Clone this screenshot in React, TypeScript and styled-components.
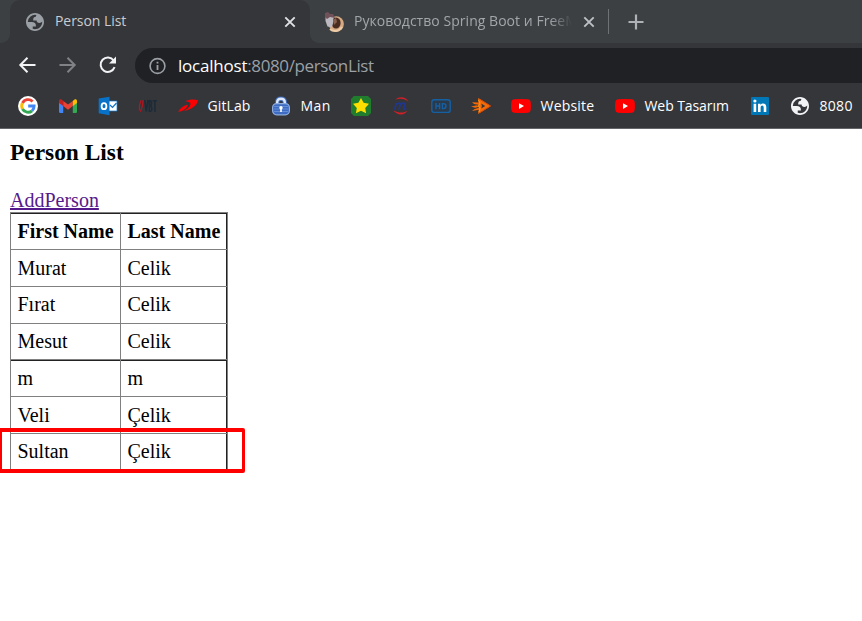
import React from "react";
import styled, { createGlobalStyle } from "styled-components";

const Global = createGlobalStyle`
  * { box-sizing: border-box; }
  html, body { margin: 0; background: #fff; overflow: hidden; }
`;

const Screen = styled.div`
  width: 862px;
  height: 621px;
  overflow: hidden;
  background: #fff;
`;

const Chrome = styled.header`
  height: 129px;
  background: #35363a;
  border-bottom: 1px solid #646568;
  font-family: "Open Sans", "Noto Sans", sans-serif;
`;

const TabStrip = styled.div`
  height: 43px;
  display: flex;
  background: #35363a;
`;

const StripEdge = styled.div`
  width: 10px;
  background: #3c4043;
  border-bottom-right-radius: 9px;
`;

const ActiveTab = styled.div`
  flex: none;
  width: 300px;
  background: linear-gradient(#3c4043, #3c4043) 0 0 / 100% 12px no-repeat;
`;

const ActiveFace = styled.div`
  height: 43px;
  padding: 0 13px 0 15px;
  border-radius: 10px 10px 0 0;
  background: #35363a;
  display: flex;
  align-items: center;
`;

const RestStrip = styled.div`
  flex: 1;
  display: flex;
  align-items: center;
  padding-left: 14px;
  background: #3c4043;
  border-bottom-left-radius: 9px;
`;

const Label = styled.span<{ $size: number; $color: string; $track?: number; $width?: number }>`
  font-size: ${(p) => p.$size}px;
  color: ${(p) => p.$color};
  letter-spacing: ${(p) => p.$track ?? 0}px;
  width: ${(p) => (p.$width ? `${p.$width}px` : "auto")};
  white-space: nowrap;
  line-height: 24px;
`;

const TabTitle = styled(Label)`
  margin: -2px 0 0 10px;
`;

const FadedTitle = styled(TabTitle)`
  flex: none;
  margin-right: 10px;
  mask-image: linear-gradient(90deg, #000 90%, transparent);
`;

const Push = styled.div`
  flex: 1;
`;

const Divider = styled.div`
  width: 1px;
  height: 25px;
  margin: 0 19px 0 12px;
  background: #6f7275;
`;

const Toolbar = styled.div`
  height: 45px;
  padding: 5px 0 5px 17px;
  display: flex;
  align-items: center;
`;

const NavIcon = styled.div`
  width: 40px;
  height: 24px;
`;

const AddressBar = styled.div`
  flex: 1;
  height: 35px;
  margin-left: -2px;
  padding-left: 13px;
  display: flex;
  align-items: center;
  border-radius: 18px 0 0 18px;
  background: #202124;
`;

const Address = styled(Label)`
  margin: 0 0 0 12px;
  em {
    font-style: normal;
    color: #9aa0a6;
    letter-spacing: -0.38px;
  }
`;

const Bookmarks = styled.nav`
  height: 36px;
  padding-left: 18px;
  display: flex;
  align-items: center;
`;

const Bookmark = styled.div<{ $width: number }>`
  flex: none;
  width: ${(p) => p.$width}px;
  display: flex;
  align-items: center;
  gap: 9.5px;
`;

const MarkLabel = styled(Label)`
  margin-top: -1px;
`;

const Icon = styled.svg`
  display: block;
  flex: none;
`;

const Page = styled.main`
  padding: 10px 0 0 10px;
  font-family: "Liberation Serif", serif;
  font-size: 20px;
  color: #000;
`;

const Heading = styled.h3`
  margin: 0;
  height: 51px;
  font-size: 23.4px;
  line-height: 27px;
`;

const AddLink = styled.a`
  display: block;
  height: 22px;
  line-height: 21px;
  color: #551a8b;
  text-decoration: underline;
`;

const Table = styled.div`
  width: 218px;
  border: 1px solid #808080;
  border-bottom: 0;
  position: relative;
  box-shadow: inset -1px 0 #222, inset 0 1px #222;
`;

const Row = styled.div<{ $height: number; $line?: "thin" | "thick"; $text?: number }>`
  display: grid;
  grid-template-columns: 110px 1fr;
  height: ${(p) => p.$height}px;
  line-height: ${(p) => p.$text ?? 37}px;
  border-top: ${(p) => (p.$line ? "1px solid #808080" : "0")};
  box-shadow: ${(p) => (p.$line === "thick" ? "inset 0 1px #222" : "none")};
`;

const Cell = styled.div<{ $bold?: boolean }>`
  padding-left: 6.5px;
  font-weight: ${(p) => (p.$bold ? 700 : 400)};
  white-space: nowrap;
  &:first-child { border-right: 1px solid #808080; }
`;

const Marker = styled.div`
  position: absolute;
  left: -13px;
  top: 215px;
  width: 247px;
  height: 45px;
  border: 4px solid #fe0000;
  border-right-width: 3.5px;
  border-radius: 2px;
`;

const Globe = ({ fill }: { fill: string }) => (
  <Icon width="20" height="20" viewBox="0.9 0.9 22.2 22.2">
    <path
      fillRule="evenodd"
      d="M12 2C6.48 2 2 6.48 2 12s4.48 10 10 10 10-4.48 10-10S17.52 2 12 2zM4 12h4.4c3.407.022 4.922 1.73 4.543 5.127H9.488v2.47a8.004 8.004 0 0 0 10.498-8.083C19.327 12.504 18.332 13 17 13c-2.137 0-3.206-.916-3.206-2.75h-3.748c-.274-2.728.683-4.092 2.87-4.092 0-.975.327-1.597.811-1.97A8.004 8.004 0 0 0 4 12z"
      fill={fill}
    />
  </Icon>
);

const Close = ({ color }: { color: string }) => (
  <Icon width="14" height="14" viewBox="0 0 14 14">
    <path d="M2.3 2.3L11.7 11.7M11.7 2.3L2.3 11.7" stroke={color} strokeWidth="1.9" />
  </Icon>
);

const Mascot = () => (
  <Icon width="20" height="22" viewBox="0 0 20 22">
    <ellipse cx="12.3" cy="13" rx="7.6" ry="7.8" fill="#d5aa84" />
    <ellipse cx="12" cy="12" rx="4.6" ry="5.6" fill="#4a2b20" />
    <path d="M1.5 5L5 3L9 6L9.5 10L8 16.5L3.5 15.5L1.5 10Z" fill="#bdb9c0" />
    <path d="M1 2L4 1L6 3L9 3L11 7L6 6L3 8L1 6Z" fill="#705258" />
    <path d="M9 9L12 7L13 11L10 14Z" fill="#85604e" />
    <path d="M6 18C9 21 15 21 18 16" stroke="#edcba6" strokeWidth="2" fill="none" />
  </Icon>
);

const Google = () => (
  <Icon width="20" height="20" viewBox="0 0 20 20">
    <circle cx="10" cy="10" r="10" fill="#fff" />
    <g fill="none" strokeWidth="2.9">
      <path d="M14.6 5.5A6.3 6.3 0 0 0 4.5 7" stroke="#ea4335" />
      <path d="M4.5 7A6.3 6.3 0 0 0 4.5 13" stroke="#fbbc05" />
      <path d="M4.5 13A6.3 6.3 0 0 0 14.1 14.8" stroke="#34a853" />
      <path d="M14.1 14.8A6.3 6.3 0 0 0 16.1 10H10.2" stroke="#4285f4" />
    </g>
  </Icon>
);

const Gmail = () => (
  <Icon width="20" height="20" viewBox="0 0 20 20">
    <path d="M1 6L5.2 9V17H2.2Q1 17 1 15.8Z" fill="#4285f4" />
    <path d="M14.8 9L19 6V15.8Q19 17 17.8 17H14.8Z" fill="#34a853" />
    <path d="M5.2 4.9L10 8.5L14.8 4.9V10.1L10 13.7L5.2 10.1Z" fill="#ea4335" />
    <path d="M1 5.2C1 3.2 3 2.8 4.4 4.2L5.2 4.9V10.1L1 7Z" fill="#c5221f" />
    <path d="M19 5.2C19 3.2 17 2.8 15.6 4.2L14.8 4.9V10.1L19 7Z" fill="#fbbc04" />
  </Icon>
);

const Outlook = () => (
  <Icon width="20" height="20" viewBox="0 0 20 20">
    <path d="M10 5H19V15H10Z" fill="#fff" stroke="#1679cb" strokeWidth=".7" />
    <path d="M12 9L14.5 11.4L18.5 7" stroke="#1473c2" strokeWidth="1.3" fill="none" />
    <path d="M.7 2.5L11.5 .8V19.2L.7 17.3Z" fill="#0872c9" />
    <ellipse cx="6" cy="10.2" rx="2.4" ry="3" fill="none" stroke="#fff" strokeWidth="1.8" />
  </Icon>
);

const Vbt = () => (
  <Icon width="20" height="20" viewBox="0 0 20 20">
    <path d="M3 4.5C1.2 8 .9 11 1.4 14.5M5 4C5.3 9 4 12.5 2.3 15.8" stroke="#b3161f" strokeWidth="1.2" fill="none" />
    <path d="M6.7 4L8.3 15.5L9.9 4M11.3 4.5V15.3H12.2Q14 15.3 13.8 12Q13.7 10 11.8 9.8Q13.6 9.5 13.5 7Q13.4 4.6 11.3 4.6M14.6 4.8H19M16.9 4.8V16" stroke="#1c2b38" strokeWidth="1.6" fill="none" />
  </Icon>
);

const Swoosh = () => (
  <Icon width="20" height="20" viewBox="0 0 20 20">
    <path d="M7 5.2C11.5 3.4 16.5 3.2 20 4.3C19 10 12.8 13.8 5.8 15C9.6 13 12.4 10.2 12.4 8C12.4 6 10 5.4 7 5.2Z" fill="#fb0003" />
    <path d="M.3 15.9C1.6 12.4 5 9.8 9.8 8.4C9.6 12 5.2 15.2 .3 15.9Z" fill="#fb0003" />
  </Icon>
);

const Lock = () => (
  <Icon width="20" height="20" viewBox="0 0 20 20">
    <path d="M6.2 10V6.3Q6.2 2.8 10 2.8T13.8 6.3V10" fill="none" stroke="#3f69b8" strokeWidth="4.4" />
    <path d="M6.2 10V6.3Q6.2 2.8 10 2.8T13.8 6.3V10" fill="none" stroke="#dce8fb" strokeWidth="2.4" />
    <rect x="1.6" y="7.6" width="16.8" height="11.2" rx="4" fill="#3d6cc2" stroke="#8faddf" strokeWidth="1.2" />
    <path d="M3 10.5H17M3 13H17M3 15.5H17" stroke="#6f96dc" strokeWidth=".8" />
    <circle cx="10" cy="11.8" r="1.7" fill="#fff" />
    <path d="M10 12V16" stroke="#fff" strokeWidth="1.6" />
  </Icon>
);

const Star = () => (
  <Icon width="20" height="20" viewBox="0 0 20 20">
    <path d="M3 0H17L20 3V17L17 20H3L0 17V3Z" fill="#217d2e" />
    <path d="M10 2L12.6 6.8L18 7.8L14.2 11.9L15.1 17.2L10 14.8L4.9 17.2L5.8 11.9L2 7.8L7.4 6.8Z" fill="#ffdf00" />
  </Icon>
);

const Swirl = () => (
  <Icon width="20" height="20" viewBox="0 0 20 20">
    <path d="M4.5 3.6C8 .2 14.5 .2 17.6 5.8C13.8 2.4 9 1.9 4.5 3.6ZM2 14.3C6 19.7 13.5 19.8 16.5 14.8C13 17.2 7.5 17.3 2 14.3Z" fill="#d02028" />
    <path d="M3.6 13.6L5.4 7M5 9C7 6.6 9.8 6.4 9.2 8.9L8 13.6M9.2 8.9C11.2 6.4 14.5 6.3 13.8 8.9L12.7 13H15.4" fill="none" stroke="#20378f" strokeWidth="1.7" />
  </Icon>
);

const Hd = () => (
  <Icon width="20" height="20" viewBox="0 0 20 20">
    <rect x=".8" y="3.8" width="18.4" height="12.6" rx="2.5" fill="#2b3a4b" stroke="#1560a3" strokeWidth="1.4" />
    <path d="M5 7V13.2M8.6 7V13.2M5 10H8.6M11.4 7.6V12.6H12.4Q15 12.6 15 10.1T12.4 7.6Z" fill="none" stroke="#1560a3" strokeWidth="1.4" />
  </Icon>
);

const Flame = () => (
  <Icon width="20" height="20" viewBox="0 0 20 20">
    <path d="M7 2L19.8 10L7 18L7.8 13.8L1 15L4.8 12L0 10.4L4.8 9.6L1 6.2L7.5 6.5Z" fill="#f36a08" />
    <path d="M10.3 7.6L14.2 10L10.3 12.4L10.8 10Z" fill="#35363a" />
    <path d="M2 8.5L7.5 9.2M2 13L7.7 11.3" stroke="#35363a" />
    <path d="M8.5 3L19.5 10L8.5 16.8" fill="none" stroke="#d94908" />
    <path d="M7.4 4L9 7L7.5 10L9 12L8 16" fill="none" stroke="#ff9c0b" />
  </Icon>
);

const YouTube = () => (
  <Icon width="20" height="20" viewBox="0 0 20 20">
    <path d="M3 3.3Q10 2.7 17 3.3Q19.3 3.5 19.6 5.8Q20.2 10 19.6 14.2Q19.3 16.5 17 16.7Q10 17.3 3 16.7Q.7 16.5 .4 14.2Q-.2 10 .4 5.8Q.7 3.5 3 3.3Z" fill="#f00" />
    <path d="M8 7.2L13 10L8 12.9Z" fill="#fff" />
  </Icon>
);

const LinkedIn = () => (
  <Icon width="20" height="20" viewBox="0 0 20 20">
    <rect x="1" y="1" width="18" height="18" rx="1" fill="#0077b7" />
    <circle cx="4.9" cy="5" r="1.6" fill="#fff" />
    <path d="M3.6 7.7H6.2V16H3.6ZM8 7.7H10.5V8.9C12.1 6.7 16.3 7 16.3 11V16H13.7V11.7C13.7 8.7 10.6 9 10.6 11.7V16H8Z" fill="#fff" />
  </Icon>
);

type Mark = { icon: React.ReactNode; width: number; text?: string; track?: number };

const marks: Mark[] = [
  { icon: <Google />, width: 40 },
  { icon: <Gmail />, width: 40 },
  { icon: <Outlook />, width: 40 },
  { icon: <Vbt />, width: 40 },
  { icon: <Swoosh />, width: 93, text: "GitLab", track: 0.1 },
  { icon: <Lock />, width: 80, text: "Man", track: 0.4 },
  { icon: <Star />, width: 40 },
  { icon: <Swirl />, width: 40 },
  { icon: <Hd />, width: 40 },
  { icon: <Flame />, width: 40 },
  { icon: <YouTube />, width: 104, text: "Website", track: 0.2 },
  { icon: <YouTube />, width: 135, text: "Web Tasarım", track: -0.08 },
  { icon: <LinkedIn />, width: 40 },
  { icon: <Globe fill="#f1f3f4" />, width: 72, text: "8080", track: 0.3 },
];

const people: { first: string; last: string; height: number; line?: "thick"; text?: number }[] = [
  { first: "Murat", last: "Celik", height: 37 },
  { first: "Fırat", last: "Celik", height: 37, text: 35 },
  { first: "Mesut", last: "Celik", height: 36, text: 35 },
  { first: "m", last: "m", height: 37, line: "thick" },
  { first: "Veli", last: "Çelik", height: 37 },
  { first: "Sultan", last: "Çelik", height: 37, text: 35 },
];

export default function App() {
  return (
    <Screen>
      <Global />
      <Chrome>
        <TabStrip>
          <StripEdge />
          <ActiveTab>
            <ActiveFace>
              <Globe fill="#9aa0a6" />
              <TabTitle $size={14} $color="#c9ccd0" $track={-0.05}>Person List</TabTitle>
              <Push />
              <Close color="#dfe1e5" />
            </ActiveFace>
          </ActiveTab>
          <RestStrip>
            <Mascot />
            <FadedTitle $size={14} $color="#a2a6aa" $width={218} $track={0.04}>
              Руководство Spring Boot и FreeM
            </FadedTitle>
            <Close color="#bdc1c6" />
            <Divider />
            <Icon width="16" height="16" viewBox="0 0 16 16">
              <path d="M8 .5V15.5M.5 8H15.5" stroke="#aeb1b5" strokeWidth="2.2" />
            </Icon>
          </RestStrip>
        </TabStrip>
        <Toolbar>
          <NavIcon>
            <Icon width="22" height="22" viewBox="0 0 22 22">
              <path d="M18.5 11H4M10.5 3.8L3.3 11L10.5 18.2" fill="none" stroke="#f1f3f4" strokeWidth="2" />
            </Icon>
          </NavIcon>
          <NavIcon>
            <Icon width="22" height="22" viewBox="0 0 22 22">
              <path d="M2.5 11H17.5M10.5 3.8L17.7 11L10.5 18.2" fill="none" stroke="#818286" strokeWidth="2" />
            </Icon>
          </NavIcon>
          <NavIcon>
            <Icon width="22" height="22" viewBox="0 0 22 22">
              <path d="M16.7 6.5A7.2 7.2 0 1 0 17.6 13.2" fill="none" stroke="#f1f3f4" strokeWidth="2" />
              <path d="M19 2.5V9.5H12Z" fill="#f1f3f4" />
            </Icon>
          </NavIcon>
          <AddressBar>
            <Icon width="18" height="18" viewBox="0 0 18 18">
              <circle cx="9.5" cy="9" r="7.4" fill="none" stroke="#9aa0a6" strokeWidth="1.6" />
              <path d="M9.5 8V13M9.5 4.8V6.6" stroke="#9aa0a6" strokeWidth="1.8" />
            </Icon>
            <Address $size={17} $color="#fff" $track={-0.22}>localhost<em>:8080/personList</em></Address>
          </AddressBar>
        </Toolbar>
        <Bookmarks>
          {marks.map((m, i) => (
            <Bookmark key={i} $width={m.width}>
              {m.icon}
              {m.text && <MarkLabel $size={14} $color="#fff" $track={m.track}>{m.text}</MarkLabel>}
            </Bookmark>
          ))}
        </Bookmarks>
      </Chrome>
      <Page>
        <Heading>Person List</Heading>
        <AddLink>AddPerson</AddLink>
        <Table>
          <Row $height={36}>
            <Cell $bold>First Name</Cell>
            <Cell $bold>Last Name</Cell>
          </Row>
          {people.map((p) => (
            <Row key={p.first} $height={p.height} $line={p.line ?? "thin"} $text={p.text}>
              <Cell>{p.first}</Cell>
              <Cell>{p.last}</Cell>
            </Row>
          ))}
          <Marker />
        </Table>
      </Page>
    </Screen>
  );
}
